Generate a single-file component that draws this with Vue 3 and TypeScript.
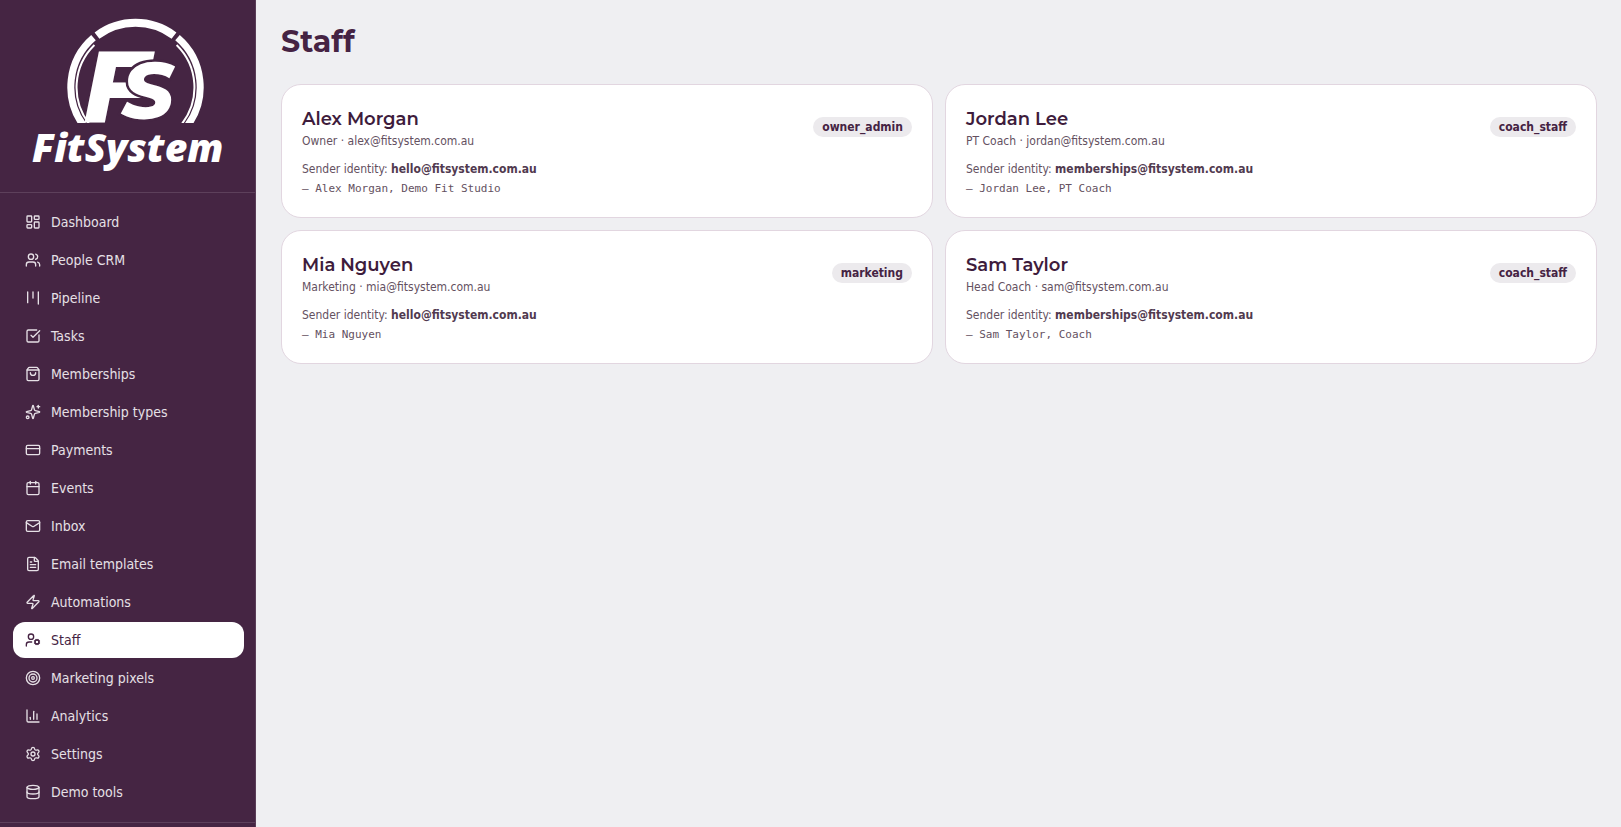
<script setup lang="ts">
interface NavItem {
  label: string
  paths: string[]
}

interface StaffMember {
  name: string
  title: string
  email: string
  role: string
  sender: string
  signature: string
}

const circle = (cx: number, cy: number, r: number): string =>
  `M${cx - r} ${cy}a${r} ${r} 0 1 0 ${r * 2} 0a${r} ${r} 0 1 0 ${-r * 2} 0`

const navItems: NavItem[] = [
  {
    label: 'Dashboard',
    paths: [
      'M4 3h5a1 1 0 0 1 1 1v7a1 1 0 0 1-1 1H4a1 1 0 0 1-1-1V4a1 1 0 0 1 1-1z',
      'M15 3h5a1 1 0 0 1 1 1v3a1 1 0 0 1-1 1h-5a1 1 0 0 1-1-1V4a1 1 0 0 1 1-1z',
      'M15 12h5a1 1 0 0 1 1 1v7a1 1 0 0 1-1 1h-5a1 1 0 0 1-1-1v-7a1 1 0 0 1 1-1z',
      'M4 16h5a1 1 0 0 1 1 1v3a1 1 0 0 1-1 1H4a1 1 0 0 1-1-1v-3a1 1 0 0 1 1-1z',
    ],
  },
  {
    label: 'People CRM',
    paths: ['M16 21v-2a4 4 0 0 0-4-4H6a4 4 0 0 0-4 4v2', circle(9, 7, 4), 'M22 21v-2a4 4 0 0 0-3-3.87', 'M16 3.13a4 4 0 0 1 0 7.75'],
  },
  { label: 'Pipeline', paths: ['M4 3v16', 'M12 3v9', 'M20 3v18'] },
  {
    label: 'Tasks',
    paths: ['M21 10.5V19a2 2 0 0 1-2 2H5a2 2 0 0 1-2-2V5a2 2 0 0 1 2-2h12.5', 'm9 11 3 3L22 4'],
  },
  {
    label: 'Memberships',
    paths: [
      'M3.4 5.5 4.8 3.2A2.4 2.4 0 0 1 6.8 2h10.4a2.4 2.4 0 0 1 2 1.2l1.4 2.3A3 3 0 0 1 21 7v13a2 2 0 0 1-2 2H5a2 2 0 0 1-2-2V7a3 3 0 0 1 .4-1.5z',
      'M3.1 6h17.8',
      'M16 10a4 4 0 0 1-8 0',
    ],
  },
  {
    label: 'Membership types',
    paths: [
      'M9.937 15.5A2 2 0 0 0 8.5 14.063l-6.135-1.582a.5.5 0 0 1 0-.962L8.5 9.936A2 2 0 0 0 9.937 8.5l1.582-6.135a.5.5 0 0 1 .963 0L14.063 8.5A2 2 0 0 0 15.5 9.937l6.135 1.581a.5.5 0 0 1 0 .964L15.5 14.063a2 2 0 0 0-1.437 1.437l-1.582 6.135a.5.5 0 0 1-.963 0z',
      'M20 2v4',
      'M22 4h-4',
      circle(4, 20, 2),
    ],
  },
  {
    label: 'Payments',
    paths: ['M4 5h16a2 2 0 0 1 2 2v10a2 2 0 0 1-2 2H4a2 2 0 0 1-2-2V7a2 2 0 0 1 2-2z', 'M2 10h20'],
  },
  {
    label: 'Events',
    paths: ['M8 2v4', 'M16 2v4', 'M5 4h14a2 2 0 0 1 2 2v14a2 2 0 0 1-2 2H5a2 2 0 0 1-2-2V6a2 2 0 0 1 2-2z', 'M3 10h18'],
  },
  {
    label: 'Inbox',
    paths: ['M4 4h16a2 2 0 0 1 2 2v12a2 2 0 0 1-2 2H4a2 2 0 0 1-2-2V6a2 2 0 0 1 2-2z', 'm22 7-8.991 5.727a2 2 0 0 1-2.009 0L2 7'],
  },
  {
    label: 'Email templates',
    paths: [
      'M6 22a2 2 0 0 1-2-2V4a2 2 0 0 1 2-2h8a2.4 2.4 0 0 1 1.704.706l3.588 3.588A2.4 2.4 0 0 1 20 8v12a2 2 0 0 1-2 2z',
      'M14 2v5a1 1 0 0 0 1 1h5',
      'M10 9H8',
      'M16 13H8',
      'M16 17H8',
    ],
  },
  {
    label: 'Automations',
    paths: [
      'M4 14a1 1 0 0 1-.78-1.63l9.9-10.2a.5.5 0 0 1 .86.46l-1.92 6.02A1 1 0 0 0 13 10h7a1 1 0 0 1 .78 1.63l-9.9 10.2a.5.5 0 0 1-.86-.46l1.92-6.02A1 1 0 0 0 11 14z',
    ],
  },
  {
    label: 'Staff',
    paths: [
      'M10 15H6a4 4 0 0 0-4 4v2',
      'm14.305 16.53.923-.382',
      'm15.228 13.852-.923-.383',
      'm16.852 12.228-.383-.923',
      'm16.852 17.772-.383.924',
      'm19.148 12.228.383-.923',
      'm19.53 18.696-.382-.924',
      'm20.772 13.852.924-.383',
      'm20.772 16.148.924.383',
      circle(18, 15, 3),
      circle(9, 7, 4),
    ],
  },
  { label: 'Marketing pixels', paths: [circle(12, 12, 10), circle(12, 12, 6), circle(12, 12, 2)] },
  { label: 'Analytics', paths: ['M3 3v16a2 2 0 0 0 2 2h16', 'M18 17V9', 'M13 17V5', 'M8 17v-3'] },
  {
    label: 'Settings',
    paths: [
      'M9.671 4.136a2.34 2.34 0 0 1 4.659 0 2.34 2.34 0 0 0 3.319 1.915 2.34 2.34 0 0 1 2.33 4.033 2.34 2.34 0 0 0 0 3.831 2.34 2.34 0 0 1-2.33 4.033 2.34 2.34 0 0 0-3.319 1.915 2.34 2.34 0 0 1-4.659 0 2.34 2.34 0 0 0-3.32-1.915 2.34 2.34 0 0 1-2.33-4.033 2.34 2.34 0 0 0 0-3.831A2.34 2.34 0 0 1 6.35 6.051a2.34 2.34 0 0 0 3.319-1.915',
      circle(12, 12, 3),
    ],
  },
  {
    label: 'Demo tools',
    paths: ['M3 5a9 3 0 1 0 18 0a9 3 0 1 0-18 0', 'M3 5v14a9 3 0 0 0 18 0V5', 'M3 12a9 3 0 0 0 18 0'],
  },
]

const activeLabel = 'Staff'

const staff: StaffMember[] = [
  {
    name: 'Alex Morgan',
    title: 'Owner',
    email: 'alex@fitsystem.com.au',
    role: 'owner_admin',
    sender: 'hello@fitsystem.com.au',
    signature: '— Alex Morgan, Demo Fit Studio',
  },
  {
    name: 'Jordan Lee',
    title: 'PT Coach',
    email: 'jordan@fitsystem.com.au',
    role: 'coach_staff',
    sender: 'memberships@fitsystem.com.au',
    signature: '— Jordan Lee, PT Coach',
  },
  {
    name: 'Mia Nguyen',
    title: 'Marketing',
    email: 'mia@fitsystem.com.au',
    role: 'marketing',
    sender: 'hello@fitsystem.com.au',
    signature: '— Mia Nguyen',
  },
  {
    name: 'Sam Taylor',
    title: 'Head Coach',
    email: 'sam@fitsystem.com.au',
    role: 'coach_staff',
    sender: 'memberships@fitsystem.com.au',
    signature: '— Sam Taylor, Coach',
  },
]
</script>

<template>
  <div class="app">
    <aside class="sidebar">
      <header class="brand">
        <svg class="logo" viewBox="31 18 196 156" role="img" aria-label="FitSystem">
          <defs>
            <clipPath id="ring-clip"><rect x="60" y="10" width="160" height="113" /></clipPath>
          </defs>
          <g clip-path="url(#ring-clip)" fill="none" stroke="#fff">
            <path stroke-width="8" d="M98 35.6A64.5 64.5 0 0 1 175 35.6" />
            <path stroke-width="7" d="M94.5 37.7A65 65 0 0 0 84.8 126" />
            <path stroke-width="7" d="M178.5 37.7A65 65 0 0 1 188.2 126" />
            <path stroke-width="2" d="M95.4 45A59.3 59.3 0 0 0 90.2 124" />
            <path stroke-width="2" d="M177.6 45A59.3 59.3 0 0 1 182.8 124" />
          </g>
          <text class="mark" x="84" y="122">
            <tspan font-size="102">F</tspan><tspan class="mark-front" x="123" y="119" font-size="80">S</tspan>
          </text>
          <text class="wordmark" x="33" y="162" font-size="39">FitSystem</text>
        </svg>
      </header>
      <nav class="nav" aria-label="Main">
        <a
          v-for="item in navItems"
          :key="item.label"
          href="#"
          class="nav-link"
          :class="{ active: item.label === activeLabel }"
          :aria-current="item.label === activeLabel ? 'page' : undefined"
        >
          <svg class="icon" viewBox="0 0 24 24" aria-hidden="true">
            <path v-for="d in item.paths" :key="d" :d="d" />
          </svg>
          <span>{{ item.label }}</span>
        </a>
      </nav>
      <footer class="sidebar-footer"></footer>
    </aside>

    <main class="main">
      <h1 class="page-title">Staff</h1>
      <section class="grid">
        <article v-for="member in staff" :key="member.name" class="card">
          <div class="card-head">
            <div>
              <h2 class="name">{{ member.name }}</h2>
              <p class="meta">{{ member.title }} · {{ member.email }}</p>
            </div>
            <span class="badge">{{ member.role }}</span>
          </div>
          <p class="sender">Sender identity: <strong>{{ member.sender }}</strong></p>
          <p class="signature">{{ member.signature }}</p>
        </article>
      </section>
    </main>
  </div>
</template>

<style>
body {
  margin: 0;
  background: #efeff2;
}
</style>

<style scoped>
.app {
  display: flex;
  height: 100vh;
  overflow: hidden;
  background: #efeff2;
  color: #452343;
  font-family: "DejaVu Sans Condensed", Tahoma, "Noto Sans", sans-serif;
  font-size: 14px;
}

.sidebar {
  box-sizing: border-box;
  display: flex;
  flex: none;
  flex-direction: column;
  width: 256px;
  background: #452543;
  border-right: 1px solid #5a3d58;
  overflow: hidden;
}

.brand {
  display: flex;
  flex: none;
  justify-content: center;
  padding: 18px 16px;
  border-bottom: 1px solid #5d405b;
}

.logo {
  width: 196px;
  height: 156px;
  overflow: visible;
}

.mark {
  fill: #fff;
  font-family: Montserrat, "DejaVu Sans", sans-serif;
  font-style: italic;
  font-weight: 800;
}

.mark-front {
  stroke: #452543;
  stroke-width: 5;
  paint-order: stroke;
}

.wordmark {
  fill: #fff;
  font-family: "Open Sans", "Noto Sans", sans-serif;
  font-style: italic;
  font-weight: 800;
}

.nav {
  display: flex;
  flex: none;
  flex-direction: column;
  gap: 2px;
  padding: 11px 11px 12px 13px;
}

.nav-link {
  display: flex;
  align-items: center;
  gap: 10px;
  height: 36px;
  padding: 0 12px;
  border-radius: 12px;
  color: #e6e0e6;
  line-height: 20px;
  text-decoration: none;
}

.nav-link.active {
  background: #fff;
  color: #452343;
}

.icon {
  flex: none;
  width: 16px;
  height: 16px;
  fill: none;
  stroke: currentColor;
  stroke-width: 2;
  stroke-linecap: round;
  stroke-linejoin: round;
}

.sidebar-footer {
  flex: 1 0 4px;
  border-top: 1px solid #5d405b;
}

.main {
  flex: 1;
  min-width: 0;
  padding: 24px 24px 24px 25px;
  overflow: auto;
}

.page-title {
  margin: 0 0 24px;
  font-family: Montserrat, Inter, sans-serif;
  font-size: 30px;
  font-weight: 700;
  line-height: 36px;
}

.grid {
  display: grid;
  grid-template-columns: repeat(2, minmax(0, 1fr));
  gap: 12px;
}

.card {
  padding: 20px;
  background: #fff;
  border: 1px solid #e2d6e0;
  border-radius: 20px;
}

.card-head {
  display: flex;
  align-items: center;
  justify-content: space-between;
  gap: 12px;
}

.name {
  margin: 0;
  color: #3e1c3c;
  font-family: Montserrat, Inter, sans-serif;
  font-size: 18px;
  font-weight: 600;
  line-height: 28px;
}

.meta,
.sender,
.signature {
  margin: 0;
  color: #64515f;
  font-size: 12px;
  line-height: 16px;
}

.sender {
  margin-top: 12px;
}

.sender strong {
  color: #513a4f;
  font-weight: 700;
}

.signature {
  margin-top: 4px;
  font-family: "DejaVu Sans Mono", "Liberation Mono", monospace;
  font-size: 11px;
}

.badge {
  flex: none;
  padding: 2px 9px;
  border-radius: 10px;
  background: #eceaed;
  color: #452343;
  font-size: 12px;
  font-weight: 700;
  line-height: 16px;
}
</style>
